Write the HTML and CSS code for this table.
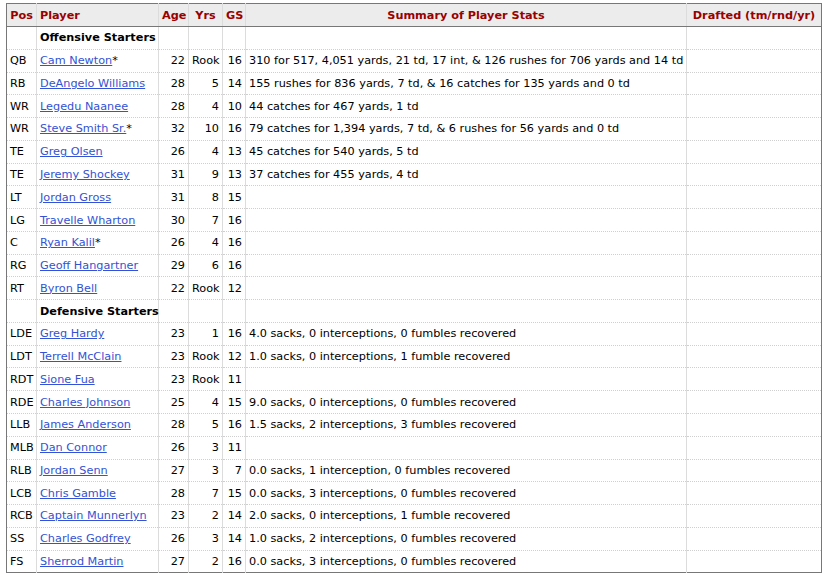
FILE: index.html
```html
<!DOCTYPE html>
<html>
<head>
<meta charset="utf-8">
<link rel="stylesheet" href="styles.css">
</head>
<body>
<table class="stats">
<colgroup>
<col class="c-pos"><col class="c-player"><col class="c-age"><col class="c-yrs"><col class="c-gs"><col class="c-sum"><col class="c-draft">
</colgroup>
<thead>
<tr><th>Pos</th><th class="left">Player</th><th>Age</th><th>Yrs</th><th>GS</th><th>Summary of Player Stats</th><th>Drafted (tm/rnd/yr)</th></tr>
</thead>
<tbody>
<tr class="group"><td></td><td><b>Offensive Starters</b></td><td></td><td></td><td></td><td></td><td></td></tr>
<tr><td>QB</td><td><a href="#">Cam Newton</a>*</td><td class="num">22</td><td class="num">Rook</td><td class="num">16</td><td>310 for 517, 4,051 yards, 21 td, 17 int, &amp; 126 rushes for 706 yards and 14 td</td><td></td></tr>
<tr><td>RB</td><td><a href="#">DeAngelo Williams</a></td><td class="num">28</td><td class="num">5</td><td class="num">14</td><td>155 rushes for 836 yards, 7 td, &amp; 16 catches for 135 yards and 0 td</td><td></td></tr>
<tr><td>WR</td><td><a href="#">Legedu Naanee</a></td><td class="num">28</td><td class="num">4</td><td class="num">10</td><td>44 catches for 467 yards, 1 td</td><td></td></tr>
<tr><td>WR</td><td><a href="#">Steve Smith Sr.</a>*</td><td class="num">32</td><td class="num">10</td><td class="num">16</td><td>79 catches for 1,394 yards, 7 td, &amp; 6 rushes for 56 yards and 0 td</td><td></td></tr>
<tr><td>TE</td><td><a href="#">Greg Olsen</a></td><td class="num">26</td><td class="num">4</td><td class="num">13</td><td>45 catches for 540 yards, 5 td</td><td></td></tr>
<tr><td>TE</td><td><a href="#">Jeremy Shockey</a></td><td class="num">31</td><td class="num">9</td><td class="num">13</td><td>37 catches for 455 yards, 4 td</td><td></td></tr>
<tr><td>LT</td><td><a href="#">Jordan Gross</a></td><td class="num">31</td><td class="num">8</td><td class="num">15</td><td></td><td></td></tr>
<tr><td>LG</td><td><a href="#">Travelle Wharton</a></td><td class="num">30</td><td class="num">7</td><td class="num">16</td><td></td><td></td></tr>
<tr><td>C</td><td><a href="#">Ryan Kalil</a>*</td><td class="num">26</td><td class="num">4</td><td class="num">16</td><td></td><td></td></tr>
<tr><td>RG</td><td><a href="#">Geoff Hangartner</a></td><td class="num">29</td><td class="num">6</td><td class="num">16</td><td></td><td></td></tr>
<tr><td>RT</td><td><a href="#">Byron Bell</a></td><td class="num">22</td><td class="num">Rook</td><td class="num">12</td><td></td><td></td></tr>
<tr class="group"><td></td><td><b>Defensive Starters</b></td><td></td><td></td><td></td><td></td><td></td></tr>
<tr><td>LDE</td><td><a href="#">Greg Hardy</a></td><td class="num">23</td><td class="num">1</td><td class="num">16</td><td>4.0 sacks, 0 interceptions, 0 fumbles recovered</td><td></td></tr>
<tr><td>LDT</td><td><a href="#">Terrell McClain</a></td><td class="num">23</td><td class="num">Rook</td><td class="num">12</td><td>1.0 sacks, 0 interceptions, 1 fumble recovered</td><td></td></tr>
<tr><td>RDT</td><td><a href="#">Sione Fua</a></td><td class="num">23</td><td class="num">Rook</td><td class="num">11</td><td></td><td></td></tr>
<tr><td>RDE</td><td><a href="#">Charles Johnson</a></td><td class="num">25</td><td class="num">4</td><td class="num">15</td><td>9.0 sacks, 0 interceptions, 0 fumbles recovered</td><td></td></tr>
<tr><td>LLB</td><td><a href="#">James Anderson</a></td><td class="num">28</td><td class="num">5</td><td class="num">16</td><td>1.5 sacks, 2 interceptions, 3 fumbles recovered</td><td></td></tr>
<tr><td>MLB</td><td><a href="#">Dan Connor</a></td><td class="num">26</td><td class="num">3</td><td class="num">11</td><td></td><td></td></tr>
<tr><td>RLB</td><td><a href="#">Jordan Senn</a></td><td class="num">27</td><td class="num">3</td><td class="num">7</td><td>0.0 sacks, 1 interception, 0 fumbles recovered</td><td></td></tr>
<tr><td>LCB</td><td><a href="#">Chris Gamble</a></td><td class="num">28</td><td class="num">7</td><td class="num">15</td><td>0.0 sacks, 3 interceptions, 0 fumbles recovered</td><td></td></tr>
<tr><td>RCB</td><td><a href="#">Captain Munnerlyn</a></td><td class="num">23</td><td class="num">2</td><td class="num">14</td><td>2.0 sacks, 0 interceptions, 1 fumble recovered</td><td></td></tr>
<tr><td>SS</td><td><a href="#">Charles Godfrey</a></td><td class="num">26</td><td class="num">3</td><td class="num">14</td><td>1.0 sacks, 2 interceptions, 0 fumbles recovered</td><td></td></tr>
<tr><td>FS</td><td><a href="#">Sherrod Martin</a></td><td class="num">27</td><td class="num">2</td><td class="num">16</td><td>0.0 sacks, 3 interceptions, 0 fumbles recovered</td><td></td></tr>
</tbody>
</table>
</body>
</html>
```
FILE: styles.css
```css
html, body {
  margin: 0;
  padding: 0;
  background: #fff;
}
body {
  padding: 3px 0 0 6px;
  font-family: "DejaVu Sans", Verdana, sans-serif;
  font-size: 11.25px;
  color: #000;
}
.stats {
  border-collapse: collapse;
  table-layout: fixed;
  width: 815px;
  border: 1px solid #777;
}
.c-pos { width: 30px; }
.c-player { width: 122px; }
.c-age { width: 30px; }
.c-yrs { width: 34px; }
.c-gs { width: 23px; }
.c-sum { width: 441px; }
.c-draft { width: 135px; }
.stats th {
  background: #ececec;
  color: #990000;
  font-weight: bold;
  text-align: center;
  height: 21px;
  padding: 1px 3px 0;
  border-bottom: 1px solid #777;
  border-left: 1px solid #dcdcdc;
  white-space: nowrap;
}
.stats th.left { text-align: left; }
.stats td {
  height: 21.77px;
  padding: 0 3px;
  white-space: nowrap;
  border-left: 1px solid #dcdcdc;
  border-top: 1px dotted #cfcfcf;
  text-align: left;
}
.stats th:first-child, .stats td:first-child { border-left: none; }
.stats tbody tr:first-child td { border-top: none; }
.stats td.num { text-align: right; }
.stats a {
  color: #3352d4;
  text-decoration: underline;
}
.group b { font-weight: bold; }
```
